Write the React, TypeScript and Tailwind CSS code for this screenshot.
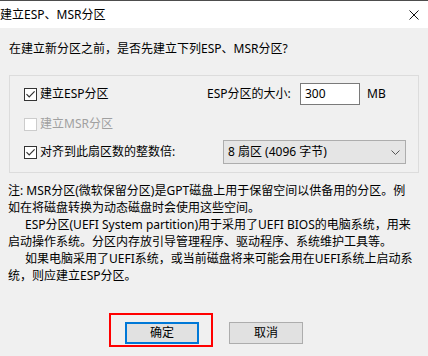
import React from "react";

function CheckBox({ checked, disabled }: { checked?: boolean; disabled?: boolean }) {
  return (
    <span
      className={`w-[13px] h-[13px] shrink-0 border bg-white flex items-center justify-center ${
        disabled ? "border-[#cccccc]" : "border-[#333333]"
      }`}
    >
      {checked && (
        <svg width="11" height="11" viewBox="0 0 11 11">
          <path d="M1.5 5.2 L4.2 7.9 L9.6 2.4" stroke="#333333" strokeWidth="1.2" fill="none" />
        </svg>
      )}
    </span>
  );
}

const noteLines = [
  { text: "注: MSR分区(微软保留分区)是GPT磁盘上用于保留空间以供备用的分区。例", indent: false },
  { text: "如在将磁盘转换为动态磁盘时会使用这些空间。", indent: false },
  { text: "ESP分区(UEFI System partition)用于采用了UEFI BIOS的电脑系统，用来", indent: true },
  { text: "启动操作系统。分区内存放引导管理程序、驱动程序、系统维护工具等。", indent: false },
  { text: "如果电脑采用了UEFI系统，或当前磁盘将来可能会用在UEFI系统上启动系", indent: true },
  { text: "统，则应建立ESP分区。", indent: false },
];

export default function App() {
  return (
    <div className="w-[428px] h-[356px] overflow-hidden bg-[#f0f0f0] text-[12px] text-black font-['Segoe_UI','Noto_Sans','Noto_Sans_CJK_SC',sans-serif]">
      {/* Title bar */}
      <div className="h-[28px] bg-white border-t border-[#4d4d4d] flex items-center justify-between">
        <span className="leading-[17px]">建立ESP、MSR分区</span>
        <svg className="mr-[9px]" width="10" height="10" viewBox="0 0 10 10">
          <path d="M0.5 0.5 L9.5 9.5 M9.5 0.5 L0.5 9.5" stroke="#111111" strokeWidth="1" />
        </svg>
      </div>

      <p className="pt-[12px] pl-[9px] leading-[17px]">在建立新分区之前，是否先建立下列ESP、MSR分区?</p>

      {/* Group box */}
      <div className="mt-[18px] ml-[9px] w-[410px] h-[98px] border border-[#dcdcdc] pt-[7px]">
        <div className="h-[22px] flex items-center">
          <div className="w-[197px] pl-[14px] flex items-center gap-[3px]">
            <CheckBox checked />
            <span>建立ESP分区</span>
          </div>
          <span className="w-[93px]">ESP分区的大小:</span>
          <div className="w-[60px] h-[22px] border border-[#7a7a7a] bg-white flex items-center pl-[4px]">300</div>
          <span className="ml-[7px]">MB</span>
        </div>

        <div className="mt-[8px] h-[22px] pl-[14px] flex items-center gap-[3px] text-[#a0a0a0]">
          <CheckBox disabled />
          <span>建立MSR分区</span>
        </div>

        <div className="mt-[5px] h-[24px] flex items-center">
          <div className="w-[213px] pl-[14px] flex items-center gap-[3px]">
            <CheckBox checked />
            <span>对齐到此扇区数的整数倍:</span>
          </div>
          <div className="w-[183px] h-[24px] bg-[#e5e5e5] border border-[#adadad] flex items-center justify-between pl-[4px] pr-[5px]">
            <span>8 扇区 (4096 字节)</span>
            <svg width="9" height="5" viewBox="0 0 9 5">
              <path d="M0.5 0.5 L4.5 4.5 L8.5 0.5" stroke="#555555" strokeWidth="1" fill="none" />
            </svg>
          </div>
        </div>
      </div>

      {/* Note */}
      <div className="mt-[9px] pl-[8px] leading-[17px] whitespace-nowrap">
        {noteLines.map((l, i) => (
          <div key={i} className={l.indent ? "pl-[17px]" : ""}>
            {l.text}
          </div>
        ))}
      </div>

      {/* Buttons */}
      <div className="mt-[38px] flex pl-[125px] gap-[30px]">
        <div className="relative">
          <button className="w-[74px] h-[22px] bg-[#e1e1e1] border-2 border-[#0078d7] flex items-center justify-center">
            确定
          </button>
          <div className="absolute -left-[16px] -top-[9px] w-[104px] h-[34px] border-2 border-[#ff0000] pointer-events-none" />
        </div>
        <button className="w-[74px] h-[22px] bg-[#e1e1e1] border border-[#adadad] flex items-center justify-center">
          取消
        </button>
      </div>
    </div>
  );
}
